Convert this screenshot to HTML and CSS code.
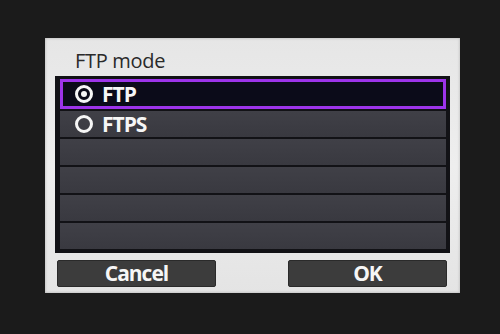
FILE: index.html
```html
<!DOCTYPE html>
<html>
<head>
<meta charset="utf-8">
<link rel="stylesheet" href="styles.css">
</head>
<body>
<div class="screen">
  <div class="dialog">
    <div class="title">FTP mode</div>
    <div class="list">
      <div class="row selected"><span class="radio checked"></span><span class="label">FTP</span></div>
      <div class="row"><span class="radio"></span><span class="label">FTPS</span></div>
      <div class="row"></div>
      <div class="row"></div>
      <div class="row"></div>
      <div class="row"></div>
    </div>
    <div class="buttons">
      <div class="btn">Cancel</div>
      <div class="btn">OK</div>
    </div>
  </div>
</div>
</body>
</html>
```

FILE: styles.css
```css
html, body {
  margin: 0;
  padding: 0;
  background: #1b1b1b;
}
.screen {
  width: 500px;
  height: 334px;
  padding-top: 38px;
  padding-left: 45px;
  box-sizing: border-box;
}
.dialog {
  width: 415px;
  height: 255px;
  box-sizing: border-box;
  background: linear-gradient(180deg, #e6e6e6 0%, #eeeeee 50%, #e4e4e4 100%);
  box-shadow: inset 0 0 3px rgba(0,0,0,0.25);
  padding: 0 10px 6px 10px;
  display: flex;
  flex-direction: column;
  font-family: "Open Sans", "Noto Sans", sans-serif;
}
.title {
  height: 38px;
  box-sizing: border-box;
  padding-left: 20px;
  padding-top: 11px;
  font-size: 20px;
  line-height: 24px;
  letter-spacing: -0.3px;
  color: #2a2a2a;
}
.list {
  height: 177px;
  box-sizing: border-box;
  background: #121216;
  padding: 3px 4px 4px 5px;
  display: flex;
  flex-direction: column;
  gap: 1.5px;
}
.row {
  height: 26.5px;
  flex: none;
  box-sizing: border-box;
  background: linear-gradient(180deg, #404047 0%, #393940 100%);
  display: flex;
  align-items: center;
  padding-left: 15px;
}
.row.selected {
  height: 30px;
  background: #0b0b19;
  border: 3px solid #9d34ea;
  padding-left: 12px;
}
.radio {
  width: 18px;
  height: 18px;
  box-sizing: border-box;
  border: 3px solid #f6f6f6;
  border-radius: 50%;
  display: flex;
  align-items: center;
  justify-content: center;
}
.radio.checked::after {
  content: "";
  width: 6px;
  height: 6px;
  border-radius: 50%;
  background: #f6f6f6;
}
.label {
  margin-left: 9px;
  color: #f6f6f6;
  font-weight: 700;
  font-size: 21px;
  line-height: 24px;
  letter-spacing: -1px;
}
.buttons {
  display: flex;
  justify-content: space-between;
  margin-top: 7px;
  padding-left: 2px;
  padding-right: 3px;
}
.btn {
  width: 159px;
  height: 27px;
  box-sizing: border-box;
  background: #3c3c3c;
  border: 1px solid #2a2a2a;
  border-radius: 2px;
  color: #f6f6f6;
  font-weight: 700;
  font-size: 21px;
  line-height: 25px;
  text-align: center;
  letter-spacing: -1px;
}
```
